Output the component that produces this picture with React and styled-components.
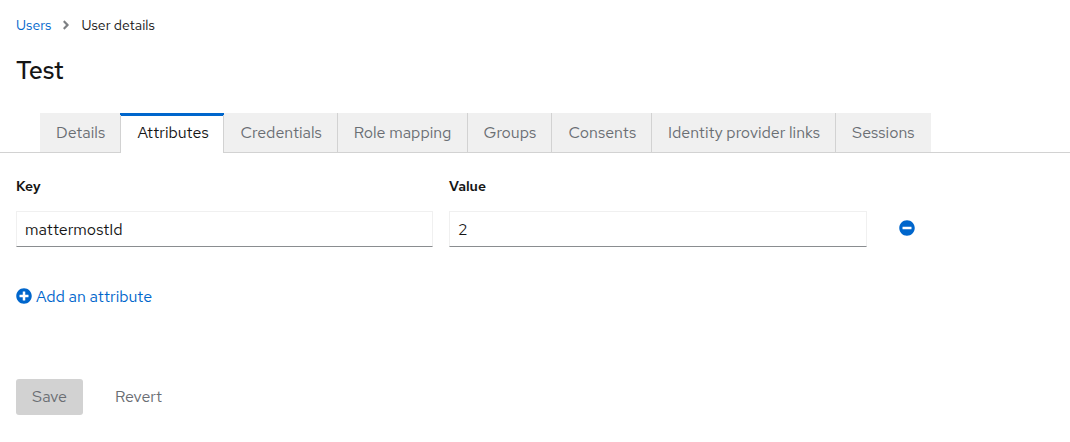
import React from "react";
import styled, { createGlobalStyle } from "styled-components";
import { FaAngleRight, FaMinusCircle, FaPlusCircle } from "react-icons/fa";

const GlobalStyle = createGlobalStyle`
  * { box-sizing: border-box; }
  body {
    margin: 0;
    background: #fff;
    color: #151515;
    font: 16px/24px "Red Hat Text", Lato, "Liberation Sans", sans-serif;
  }
  input, button { font: inherit; }
`;

const Page = styled.main`
  height: 442px;
  overflow: hidden;
`;

const Header = styled.header`
  padding: 14px 16px 0;
`;

const Breadcrumb = styled.nav`
  display: flex;
  align-items: center;
  height: 22px;
  font-size: 14px;
  line-height: 22px;
`;

const Crumb = styled.span`
  color: ${(p) => (p.$link ? "#06c" : "#151515")};
`;

const Separator = styled(FaAngleRight)`
  width: 14px;
  height: 14px;
  margin: 0 8px;
  color: #7d8083;
`;

const Title = styled.h1`
  margin: 19px 0 0;
  font-size: 25px;
  font-weight: 500;
  line-height: 31px;
  letter-spacing: -0.4px;
`;

const Tabs = styled.div`
  display: flex;
  height: 40px;
  margin-top: 27px;
  padding-left: 40px;
  box-shadow: inset 0 -1px #d2d2d2;
`;

const Tab = styled.button`
  width: ${(p) => p.$width}px;
  height: 39px;
  padding: 0 0 0 ${(p) => p.$inset || 16}px;
  border: 0 solid #d2d2d2;
  border-right-width: ${(p) => (p.$borderless ? 0 : 1)}px;
  background: #f0f0f0;
  color: #6a6e73;
  text-align: left;
  white-space: nowrap;
  ${(p) =>
    p.$active &&
    `
    height: 40px;
    padding-bottom: 1px;
    border-left-width: 1px;
    background: #fff;
    border-image: linear-gradient(#06c 3px, #d2d2d2 3px) 1;
    box-shadow: inset 0 3px #06c;
    color: #151515;
  `}
`;

const Attributes = styled.section`
  display: grid;
  grid-template-columns: 417px 418px 40px;
  column-gap: 16px;
  padding: 22px 16px 0;
`;

const Heading = styled.div`
  height: 36px;
  font-size: 14px;
  font-weight: 600;
  line-height: 22px;
`;

const Field = styled.input`
  width: 100%;
  height: 36px;
  padding: 0 8px;
  border: 1px solid #f0f0f0;
  border-bottom-color: #8a8d90;
  border-radius: 0;
  outline: 0;
  background: #fff;
  color: #151515;
`;

const RemoveButton = styled.button`
  display: flex;
  padding: 9px 0 0 16px;
  border: 0;
  background: none;
  color: #06c;
  font-size: 16px;
`;

const AddButton = styled.button`
  display: flex;
  align-items: center;
  gap: 4px;
  height: 24px;
  margin: 37px 0 0 16px;
  padding: 0;
  border: 0;
  background: none;
  color: #06c;
`;

const AddLabel = styled.span`
  padding-top: 2px;
  line-height: 24px;
`;

const Actions = styled.footer`
  display: flex;
  gap: 16px;
  margin: 71px 0 0 16px;
`;

const Action = styled.button`
  width: ${(p) => (p.$filled ? 67 : 79)}px;
  height: 36px;
  padding: 0;
  border: 0;
  border-radius: 3px;
  background: ${(p) => (p.$filled ? "#d2d2d2" : "none")};
  color: #6a6e73;
`;

const tabs = [
  { label: "Details", width: 80, borderless: true },
  { label: "Attributes", width: 104, active: true, inset: 16.4 },
  { label: "Credentials", width: 114, inset: 16.4 },
  { label: "Role mapping", width: 130, inset: 15.7 },
  { label: "Groups", width: 84, inset: 15.6 },
  { label: "Consents", width: 100, inset: 16.4 },
  { label: "Identity provider links", width: 184 },
  { label: "Sessions", width: 95, borderless: true },
];

export default function App() {
  return (
    <Page>
      <GlobalStyle />
      <Header>
        <Breadcrumb>
          <Crumb $link>Users</Crumb>
          <Separator />
          <Crumb>User details</Crumb>
        </Breadcrumb>
        <Title>Test</Title>
      </Header>
      <Tabs>
        {tabs.map((t) => (
          <Tab
            key={t.label}
            $width={t.width}
            $active={t.active}
            $borderless={t.borderless}
            $inset={t.inset}
          >
            {t.label}
          </Tab>
        ))}
      </Tabs>
      <Attributes>
        <Heading>Key</Heading>
        <Heading>Value</Heading>
        <span />
        <Field defaultValue="mattermostId" />
        <Field defaultValue="2" />
        <RemoveButton aria-label="Remove attribute">
          <FaMinusCircle />
        </RemoveButton>
      </Attributes>
      <AddButton>
        <FaPlusCircle />
        <AddLabel>Add an attribute</AddLabel>
      </AddButton>
      <Actions>
        <Action $filled>Save</Action>
        <Action>Revert</Action>
      </Actions>
    </Page>
  );
}
